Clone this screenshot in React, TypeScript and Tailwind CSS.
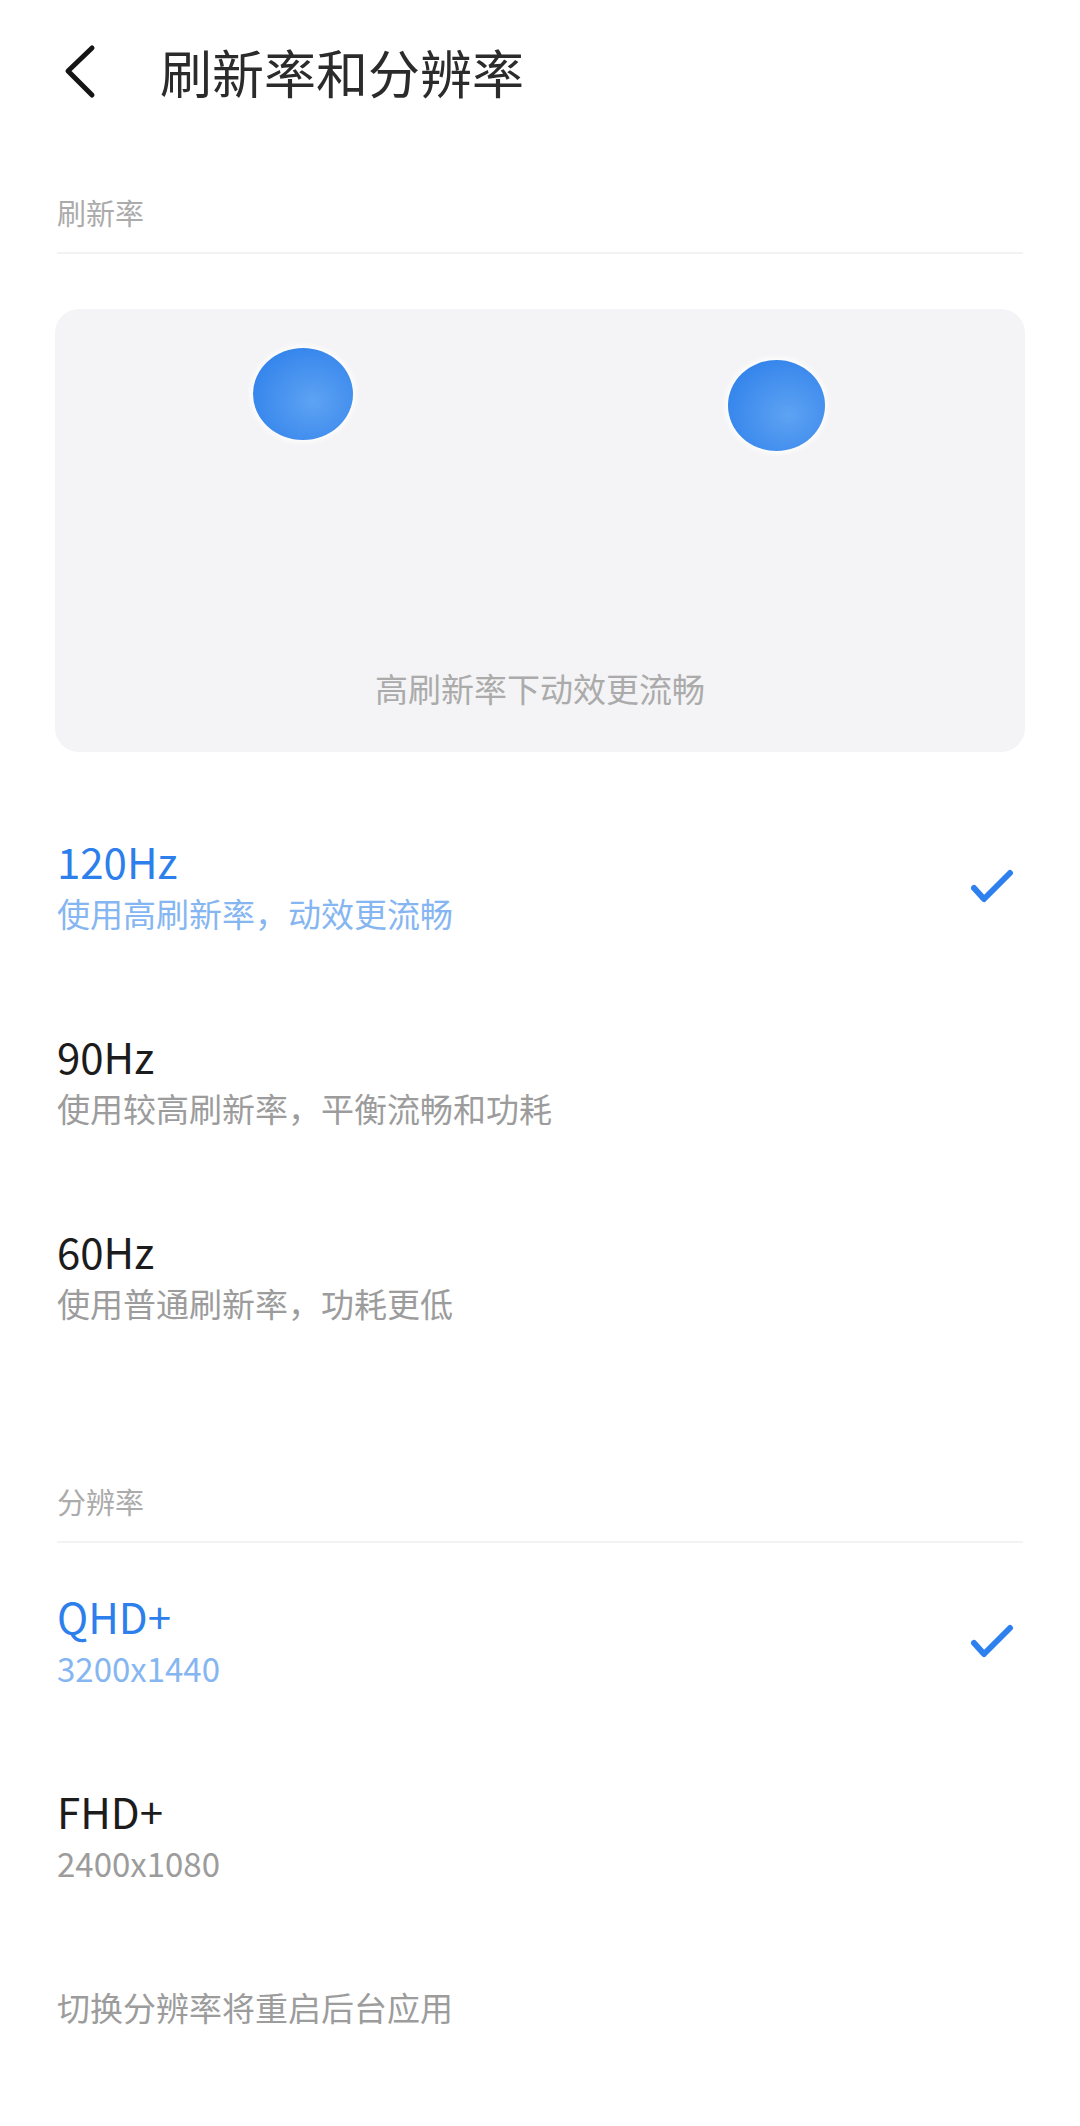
import React from "react";

const Check = () => (
  <svg width="44" height="36" viewBox="0 0 44 36" fill="none">
    <path
      d="M4 20 L14 31 L40 5"
      stroke="#2f80ef"
      strokeWidth="6"
      strokeLinecap="round"
      strokeLinejoin="round"
    />
  </svg>
);

interface OptionProps {
  title: string;
  desc: string;
  selected?: boolean;
}

const Option = (props: OptionProps) => {
  return (
    <div className="flex items-center justify-between pl-[57px] pr-[66px] pt-[48px] pb-[47px]">
      <div className="flex flex-col gap-[4px]">
        <p
          className={`text-[42px] leading-[50px] ${
            props.selected ? "text-[#2d80ec]" : "text-[#1c1c1c]"
          }`}
        >
          {props.title}
        </p>
        <p
          className={`text-[33px] leading-[46px] ${
            props.selected ? "text-[#86b6f1]" : "text-[#9c9c9c]"
          }`}
        >
          {props.desc}
        </p>
      </div>
      {props.selected && <Check />}
    </div>
  );
};

const SectionLabel = ({ text }: { text: string }) => (
  <div className="px-[57px]">
    <p className="text-[29px] leading-[40px] text-[#ababab]">{text}</p>
    <div className="mt-[20px] h-[2px] bg-[#f3f3f3]" />
  </div>
);

const App = () => {
  return (
    <div className="w-[1080px] min-h-[2126px] bg-white font-['Noto_Sans_CJK_SC',sans-serif]">
      <div className="flex h-[144px] items-center pl-[62px]">
        <svg width="36" height="56" viewBox="0 0 36 56" fill="none">
          <path
            d="M30 4 L6 27 L30 51"
            stroke="#151515"
            strokeWidth="5"
            strokeLinecap="round"
            strokeLinejoin="round"
          />
        </svg>
        <h1 className="ml-[62px] text-[52px] leading-[64px] text-[#2b2b2b]">
          刷新率和分辨率
        </h1>
      </div>

      <div className="mt-[48px]">
        <SectionLabel text="刷新率" />
      </div>

      <div className="mx-[55px] mt-[55px] flex h-[443px] flex-col rounded-[24px] bg-[#f4f4f6]">
        <div className="flex items-start pl-[198px] pt-[39px]">
          <div className="h-[92px] w-[100px] rounded-[50%] bg-[radial-gradient(ellipse_at_60%_58%,#5ea3f3,#3585ec_75%)] shadow-[0_0_6px_2px_#ffffff]" />
          <div className="ml-[375px] mt-[12px] h-[91px] w-[97px] rounded-[50%] bg-[radial-gradient(ellipse_at_62%_60%,#5ea3f3,#3585ec_75%)] shadow-[0_0_6px_2px_#ffffff]" />
        </div>
        <p className="mt-auto pb-[41px] text-center text-[33px] leading-[46px] text-[#ababab]">
          高刷新率下动效更流畅
        </p>
      </div>

      <div className="mt-[36px]">
        <Option title="120Hz" desc="使用高刷新率，动效更流畅" selected />
        <Option title="90Hz" desc="使用较高刷新率，平衡流畅和功耗" />
        <Option title="60Hz" desc="使用普通刷新率，功耗更低" />
      </div>

      <div className="mt-[108px]">
        <SectionLabel text="分辨率" />
      </div>

      <div>
        <Option title="QHD+" desc="3200x1440" selected />
        <Option title="FHD+" desc="2400x1080" />
      </div>

      <p className="mt-[51px] px-[57px] text-[33px] leading-[46px] text-[#9c9c9c]">
        切换分辨率将重启后台应用
      </p>
    </div>
  );
};

export default App;
